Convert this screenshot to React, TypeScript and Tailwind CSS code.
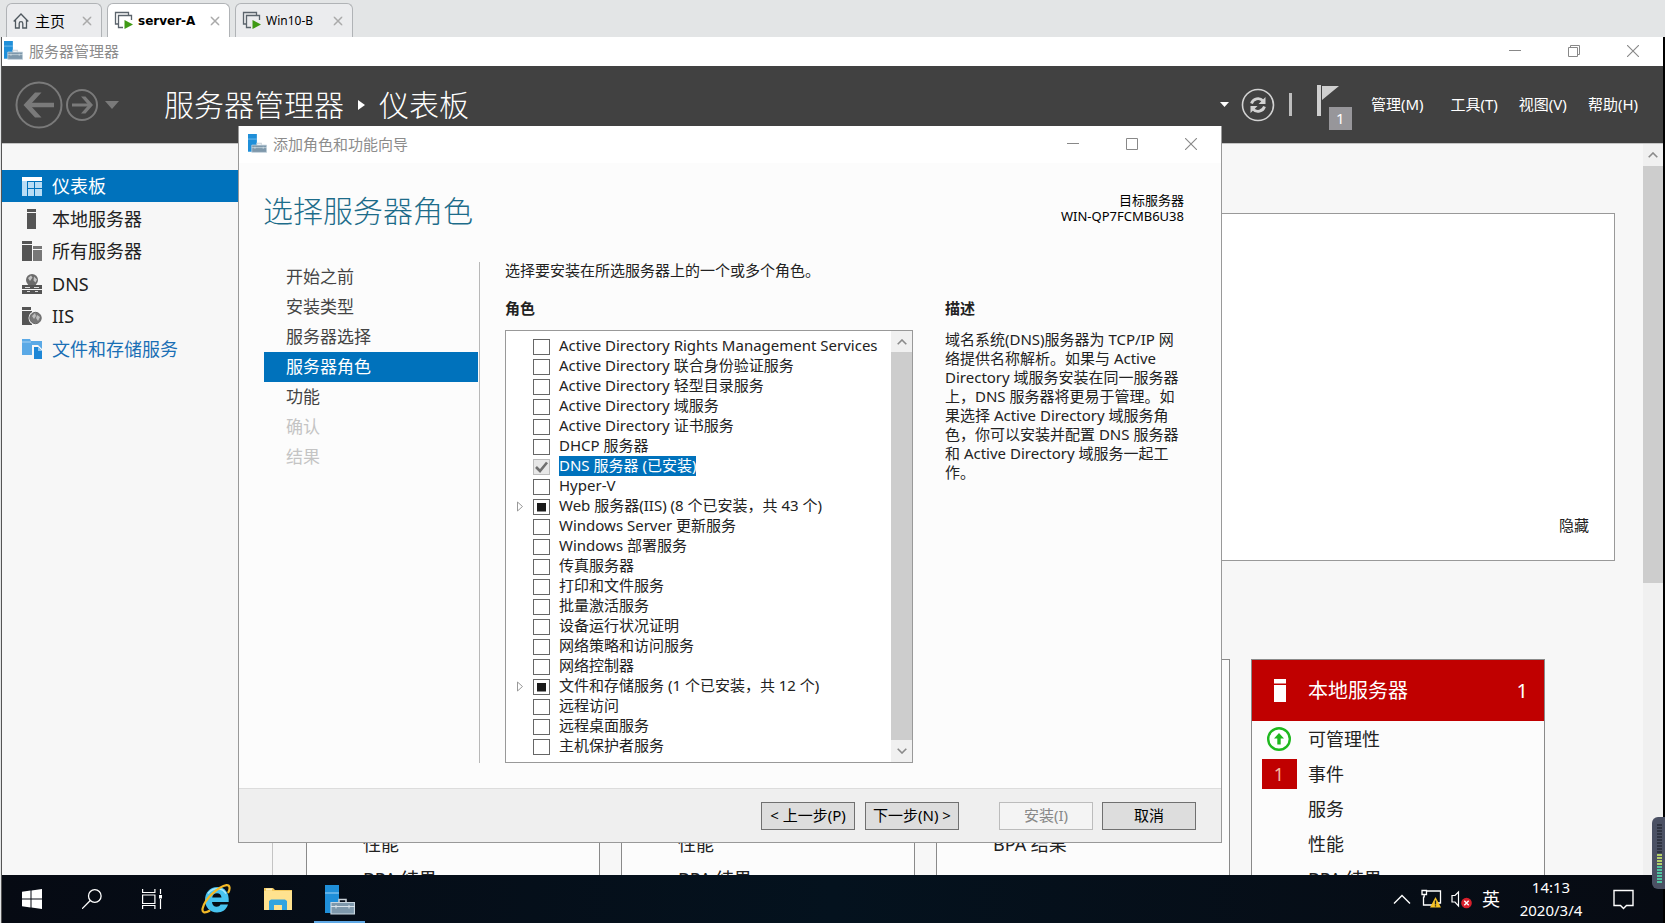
import { useEffect, useRef, type ReactNode } from 'react'
import { clsx } from 'clsx'

type RoleState = 'off' | 'installed' | 'partial'

const ROLES: { label: string; state?: RoleState }[] = [
  { label: 'Active Directory Rights Management Services' },
  { label: 'Active Directory 联合身份验证服务' },
  { label: 'Active Directory 轻型目录服务' },
  { label: 'Active Directory 域服务' },
  { label: 'Active Directory 证书服务' },
  { label: 'DHCP 服务器' },
  { label: 'DNS 服务器 (已安装)', state: 'installed' },
  { label: 'Hyper-V' },
  { label: 'Web 服务器(IIS) (8 个已安装，共 43 个)', state: 'partial' },
  { label: 'Windows Server 更新服务' },
  { label: 'Windows 部署服务' },
  { label: '传真服务器' },
  { label: '打印和文件服务' },
  { label: '批量激活服务' },
  { label: '设备运行状况证明' },
  { label: '网络策略和访问服务' },
  { label: '网络控制器' },
  { label: '文件和存储服务 (1 个已安装，共 12 个)', state: 'partial' },
  { label: '远程访问' },
  { label: '远程桌面服务' },
  { label: '主机保护者服务' },
]

const STEPS = [
  { label: '开始之前' },
  { label: '安装类型' },
  { label: '服务器选择' },
  { label: '服务器角色', current: true },
  { label: '功能' },
  { label: '确认', disabled: true },
  { label: '结果', disabled: true },
]

const SIDEBAR = [
  { label: '仪表板', icon: DashboardIcon, active: true },
  { label: '本地服务器', icon: ServerIcon },
  { label: '所有服务器', icon: ServersIcon },
  { label: 'DNS', icon: DnsIcon },
  { label: 'IIS', icon: IisIcon },
  { label: '文件和存储服务', icon: StorageIcon, link: true },
]

const MENUS = ['管理(M)', '工具(T)', '视图(V)', '帮助(H)']

/* ---------- icons ---------- */

function ServerManagerIcon({ className }: { className?: string }) {
  return (
    <svg viewBox="0 0 30 30" className={className} aria-hidden="true">
      <path d="M0 0h14v28H0z" fill="#1f8fd9" />
      <path d="M0 8h14" stroke="#8cc8f0" strokeWidth="1.2" />
      <path d="M14 17v-2.500h7V17" fill="none" stroke="#c8d0d6" strokeWidth="1.6" />
      <path d="M6 17.500h23.500v11.500H6z" fill="#7e98ab" stroke="#c8d6e0" strokeWidth="1.2" />
      <path d="M6 21.500h24M11 20v3.500M24 20v3.500" stroke="#dbe5ec" strokeWidth="1" />
    </svg>
  )
}

function DashboardIcon() {
  return (
    <svg viewBox="0 0 20 19" className="h-[19px] w-5" aria-hidden="true">
      <path d="M0 0h20v4H0z" fill="#fff" />
      <path d="M0 4h5v15H0zM6 5h6v6H6zM13 5h7v6h-7zM6 12h6v7H6zM13 12h7v7h-7z" fill="#b9ddf5" />
    </svg>
  )
}

function ServerIcon() {
  return (
    <svg viewBox="0 0 20 20" className="size-5" aria-hidden="true">
      <path d="M5 0h9v3H5zM5 4h9v16H5z" fill="#555" />
    </svg>
  )
}

function ServersIcon() {
  return (
    <svg viewBox="0 0 20 20" className="size-5" aria-hidden="true">
      <path d="M0 0h10v3H0zM0 4h10v16H0z" fill="#555" />
      <path d="M11 5h9v3h-9zM11 9h9v11h-9z" fill="#777" />
    </svg>
  )
}

function DnsIcon() {
  return (
    <svg viewBox="0 0 20 20" className="size-5" aria-hidden="true">
      <circle cx="10" cy="6" r="6" fill="#6b6b6b" />
      <path d="M6 4l3-2.500 1.500 2L8 7zM12 2.500l3 3-1.500 3-2-2z" fill="#c4c4c4" />
      <path d="M0 11h20v4H0zM0 16h20v4H0z" fill="#555" />
      <path d="M3 13.500h5M12 13.500h5M5 17.500h3M13 17.500h3" stroke="#ddd" />
    </svg>
  )
}

function IisIcon() {
  return (
    <svg viewBox="0 0 20 20" className="size-5" aria-hidden="true">
      <path d="M0 1h9v3H0zM0 5h10v14H0z" fill="#555" />
      <circle cx="13.500" cy="12" r="7" fill="#f7f7f7" />
      <circle cx="13.500" cy="12" r="5.700" fill="#777" stroke="#666" strokeWidth="1" />
      <path d="M10 10l3-3 1 3-2 3zM15 9l3 2-2 4-2-3z" fill="#bdbdbd" />
    </svg>
  )
}

function StorageIcon() {
  return (
    <svg viewBox="0 0 20 20" className="size-5" aria-hidden="true">
      <path d="M0 0h8l1 2h11v14H0z" fill="#5aa9e6" />
      <path d="M0 3h9" stroke="#a8d2f3" />
      <path d="M10 6h6l4 4v10h-9v-4h-1z" fill="#f7f7f7" />
      <path d="M12 8h4l4 4v8h-8z" fill="#1e87d6" />
      <path d="M16 8v4h4z" fill="#8cc6f2" />
    </svg>
  )
}

function MinimizeIcon() {
  return (
    <svg viewBox="0 0 12 12" className="size-3" aria-hidden="true">
      <path d="M0 5.500h12" stroke="#888" />
    </svg>
  )
}

function MaximizeIcon() {
  return (
    <svg viewBox="0 0 12 12" className="size-3" aria-hidden="true">
      <path d="M.5.5h11v11H.5z" fill="none" stroke="#888" />
    </svg>
  )
}

function RestoreIcon() {
  return (
    <svg viewBox="0 0 12 12" className="size-3" aria-hidden="true">
      <path d="M.5 2.500h9v9h-9zM2.500 2.500v-2h9v9h-2" fill="none" stroke="#888" />
    </svg>
  )
}

function CloseIcon({ stroke = '#888', strokeWidth = 1.1 }: { stroke?: string; strokeWidth?: number }) {
  return (
    <svg viewBox="0 0 12 12" className="size-3" aria-hidden="true">
      <path d="M0 0l12 12M12 0L0 12" stroke={stroke} strokeWidth={strokeWidth} />
    </svg>
  )
}

function VmIcon() {
  return (
    <svg viewBox="0 0 20 19" className="h-[19px] w-5" aria-hidden="true">
      <path d="M4 13H1.500V1.500h13V4" fill="none" stroke="#5b646c" strokeWidth="1.300" />
      <path d="M9 16.500H4.500v-12h13V9" fill="none" stroke="#5b646c" strokeWidth="1.300" />
      <path d="M10.500 9l8.500 4.500-8.500 4.500z" fill="#3f9a14" />
    </svg>
  )
}

function HomeIcon() {
  return (
    <svg viewBox="0 0 16 16" className="mr-0.5 size-4" aria-hidden="true">
      <path d="M.7 8.500L8 1l7.300 7.500M2.500 7v8h3.700v-4.500a1.800 1.800 0 0 1 3.600 0V15h3.700V7" fill="none" stroke="#4f585f" strokeWidth="1.300" />
    </svg>
  )
}

function Chevron({ up = false }: { up?: boolean }) {
  return (
    <svg viewBox="0 0 10 6" className={clsx('h-1.5 w-2.5', !up && 'rotate-180')} aria-hidden="true">
      <path d="M.7 5.300L5 1l4.300 4.300" fill="none" stroke="#8a8a8a" strokeWidth="1.600" />
    </svg>
  )
}

/* ---------- shared pieces ---------- */

function CaptionButtons({ restored = false }: { restored?: boolean }) {
  const button = 'flex h-7 w-[59px] items-center justify-center'
  return (
    <div className="ml-auto flex pr-px">
      <button aria-label="最小化" className={button}><MinimizeIcon /></button>
      <button aria-label="最大化" className={button}>{restored ? <RestoreIcon /> : <MaximizeIcon />}</button>
      <button aria-label="关闭" className={button}><CloseIcon /></button>
    </div>
  )
}

function Tab({ icon, label, active = false, className }: { icon: ReactNode; label: string; active?: boolean; className: string }) {
  return (
    <div
      className={clsx(
        'flex h-[34px] items-center rounded-t-md border border-b-0 border-[#b0b3b6] pr-2 pl-1.5 leading-5 text-black',
        active ? "bg-white font-['DejaVu_Sans',sans-serif] font-bold" : 'bg-[#ebecee]',
        className,
      )}
    >
      {icon}
      <span className="ml-1 whitespace-nowrap">{label}</span>
      <button aria-label="关闭标签" className="ml-auto scale-75"><CloseIcon stroke="#aaa" strokeWidth={2} /></button>
    </div>
  )
}

/* ---------- server manager ---------- */

function HeaderBar() {
  return (
    <header className="flex h-[77px] shrink-0 items-center bg-[#414141] pr-[25px] pl-[13px] text-white">
      <button aria-label="后退">
        <svg viewBox="0 0 48 48" className="size-12" fill="none" stroke="#7a7a7a">
          <circle cx="24" cy="24" r="22.500" strokeWidth="2" />
          <path d="M39 24H12" strokeWidth="4.500" />
          <path d="M20 11.500h6.500L15 24l11.500 12.500H20L8.500 24z" fill="#7a7a7a" stroke="none" />
        </svg>
      </button>
      <button aria-label="前进" className="ml-0.5">
        <svg viewBox="0 0 34 34" className="size-[34px]" fill="none" stroke="#7a7a7a">
          <circle cx="17" cy="17" r="15" strokeWidth="2" />
          <path d="M7 17h19" strokeWidth="3" />
          <path d="M16 8.500h4.500L28 17l-7.500 8.500H16L23.500 17z" fill="#7a7a7a" stroke="none" />
        </svg>
      </button>
      <button aria-label="历史记录" className="ml-1.5">
        <svg viewBox="0 0 14 8" className="h-2 w-3.5"><path d="M0 0h14L7 8z" fill="#7a7a7a" /></svg>
      </button>
      <h1 className="ml-[45px] flex items-center text-[30px] leading-10 font-light">
        服务器管理器
        <svg viewBox="0 0 7 10" className="mx-3.5 h-2.5 w-[7px]" aria-hidden="true"><path d="M0 0l7 5-7 5z" fill="#fff" /></svg>
        仪表板
      </h1>
      <div className="ml-auto flex items-center">
        <button aria-label="更多">
          <svg viewBox="0 0 9 5" className="h-[5px] w-[9px]"><path d="M0 0h9L4.500 5z" fill="#fff" /></svg>
        </button>
        <button aria-label="刷新" className="ml-3">
          <svg viewBox="0 0 34 34" className="size-[34px]" fill="none" stroke="#d2d2d2">
            <circle cx="17" cy="17" r="15.500" strokeWidth="1.600" />
            <path d="M10.500 15.500c1.500-5 8-6.500 11.500-2.500M23.500 18.500c-1.500 5-8 6.500-11.500 2.500" strokeWidth="2.800" />
            <path d="M24.500 9v7h-7zM9.500 25v-7h7z" fill="#d2d2d2" stroke="none" />
          </svg>
        </button>
        <span className="ml-3.5 h-[23px] w-[3px] bg-[#bdbdbd]" />
        <button aria-label="通知" className="relative ml-[25px] h-[42px] w-[35px]">
          <svg viewBox="0 0 22 31" className="h-[31px] w-[22px] -translate-y-1">
            <path d="M0 0h4v31H0zM5 1h17L5 15z" fill="#cfcfcf" />
          </svg>
          <span className="absolute right-0 -bottom-1 size-[23px] bg-[#97969a] text-[15px] leading-[23px]">1</span>
        </button>
        <nav className="ml-[19px] flex gap-[21px] pb-0.5 text-[15px] leading-5">
          {MENUS.map((menu) => (
            <button key={menu} className="first:mr-1.5">{menu}</button>
          ))}
        </nav>
      </div>
    </header>
  )
}

function Sidebar() {
  return (
    <aside className="w-[271px] shrink-0 border-r border-[#c4c4c4] pt-[26px]">
      <nav className="flex h-[195px] flex-col justify-between">
        {SIDEBAR.map(({ label, icon: Icon, active, link }) => (
          <a
            key={label}
            href="#"
            className={clsx(
              'flex h-8 items-center gap-2.5 pl-5 text-[18px] leading-8',
              active ? 'bg-[#0072bc] text-white' : link ? 'text-[#1a6fb5]' : 'text-[#222]',
            )}
          >
            <Icon />
            {label}
          </a>
        ))}
      </nav>
    </aside>
  )
}

function TileRow({ label, children }: { label: string; children?: ReactNode }) {
  return (
    <div className="flex h-[35px] items-center">
      <div className="flex w-14 items-center justify-center pr-0.5">{children}</div>
      <span className="text-[18px] leading-7">{label}</span>
    </div>
  )
}

function Dashboard() {
  return (
    <main className="min-w-0 flex-1 overflow-hidden pt-[69px] pr-7 pl-[33px]">
      <section className="flex h-[348px] items-end justify-end border border-[#999] bg-white pr-[25px] pb-[25px]">
        <button className="text-[15px] leading-5 text-[#222]">隐藏</button>
      </section>
      <div className="mt-[98px] flex gap-[21px] text-[#222]">
        {[['性能', 'BPA 结果'], ['性能', 'BPA 结果'], ['BPA 结果']].map((rows, i) => (
          <section key={i} className="h-[260px] w-[294px] shrink-0 border border-[#8a8a8a] bg-[#fcfcfc] pt-[166px]">
            {rows.map((row) => <TileRow key={row} label={row} />)}
          </section>
        ))}
        <section className="h-[260px] w-[294px] shrink-0 border border-[#8a8a8a] bg-[#fcfcfc]">
          <h2 className="flex h-[61px] items-center bg-[#c00000] pr-4 text-[20px] leading-8 font-normal text-white">
            <svg viewBox="0 0 12 23" className="mr-[22px] ml-[22px] h-[23px] w-3" aria-hidden="true">
              <path d="M0 0h12v4.500H0zM0 6h12v17H0z" fill="#fff" />
            </svg>
            本地服务器
            <span className="ml-auto">1</span>
          </h2>
          <TileRow label="可管理性">
            <svg viewBox="0 0 24 24" className="size-6" aria-hidden="true">
              <circle cx="12" cy="12" r="10.800" fill="#fff" stroke="#1fb81f" strokeWidth="2.400" />
              <path d="M12 6l5 5.500h-3.300V17.500h-3.400v-6H7z" fill="#1fb81f" />
            </svg>
          </TileRow>
          <TileRow label="事件">
            <span className="h-[30px] w-[35px] bg-[#c00000] text-center text-[18px] leading-[30px] text-[#f3b9a0]">1</span>
          </TileRow>
          <TileRow label="服务" />
          <TileRow label="性能" />
          <TileRow label="BPA 结果" />
        </section>
      </div>
    </main>
  )
}

/* ---------- wizard ---------- */

function RoleRow({ label, state = 'off' }: { label: string; state?: RoleState }) {
  const box = useRef<HTMLInputElement>(null)

  useEffect(() => {
    if (box.current) box.current.indeterminate = state === 'partial'
  }, [state])

  return (
    <li className="flex h-5 items-center">
      <span className="flex w-[27px] justify-center">
        {state === 'partial' && (
          <button aria-label="展开">
            <svg viewBox="0 0 6 11" className="h-[11px] w-1.5"><path d="M.5 1v9l5-4.500z" fill="#fff" stroke="#999" /></svg>
          </button>
        )}
      </span>
      <label className="flex items-center">
        <span className="relative mt-0.5 flex">
          <input
            ref={box}
            type="checkbox"
            defaultChecked={state === 'installed'}
            disabled={state === 'installed'}
            className={clsx('h-4 w-[17px] appearance-none border', state === 'installed' ? 'border-[#bbb] bg-[#e8e8e8]' : 'border-[#666] bg-white')}
          />
          {state === 'installed' && (
            <svg viewBox="0 0 17 16" className="absolute inset-0" aria-hidden="true">
              <path d="M3 8l4 4 7-8.500" fill="none" stroke="#707070" strokeWidth="2.600" />
            </svg>
          )}
          {state === 'partial' && (
            <svg viewBox="0 0 17 16" className="absolute inset-0" aria-hidden="true">
              <path d="M4 4h9v8.500H4z" fill="#1a1a1a" />
            </svg>
          )}
        </span>
        <span className={clsx('ml-[9px] h-5 leading-[18px] whitespace-nowrap', state === 'installed' && 'bg-[#0072bc] text-white')}>{label}</span>
      </label>
    </li>
  )
}

function WizardButton({ children, className, disabled }: { children: ReactNode; className?: string; disabled?: boolean }) {
  return (
    <button
      disabled={disabled}
      className={clsx(
        'h-7 w-[94px] border pb-0.5 text-[15px] leading-6 whitespace-nowrap',
        disabled ? 'border-[#bcbcbc] bg-[#f4f4f4] text-[#888]' : 'border-[#707070] bg-[#dddddd] text-black',
        className,
      )}
    >
      {children}
    </button>
  )
}

function Wizard() {
  return (
    <div
      role="dialog"
      aria-label="添加角色和功能向导"
      className="absolute top-[126px] left-[238px] w-[984px] border border-t-0 border-[#999] bg-[#fcfcfc] text-[15px] text-[#222]"
    >
      <div className="flex h-[37px] items-center bg-white pb-0.5 pl-[9px] text-[#8c8c8c]">
        <ServerManagerIcon className="mr-1.5 size-[19px]" />
        <span className="leading-5">添加角色和功能向导</span>
        <CaptionButtons />
      </div>

      <div className="flex items-start justify-between pt-[29px] pr-[37px] pl-6">
        <h2 className="text-[30px] leading-[38px] font-light text-[#1d6c8a]">选择服务器角色</h2>
        <p className="text-right text-[13px] leading-4 text-black">
          目标服务器
          <br />
          WIN-QP7FCMB6U38
        </p>
      </div>

      <div className="flex pt-8 pb-[25px] pl-[25px]">
        <ol className="w-[216px] border-r border-[#b8b8b8] pr-px">
          {STEPS.map(({ label, current, disabled }) => (
            <li
              key={label}
              className={clsx(
                'h-[30px] pl-[22px] text-[17px] leading-[30px]',
                current && 'bg-[#0072bc] text-white',
                disabled ? 'text-[#c4c4c4]' : !current && 'text-[#444]',
              )}
            >
              {label}
            </li>
          ))}
        </ol>

        <div className="ml-[25px] w-[408px]">
          <p className="leading-4">选择要安装在所选服务器上的一个或多个角色。</p>
          <h3 className="mt-[22px] leading-4 font-bold">角色</h3>
          <div className="mt-3.5 flex border border-[#999] bg-white">
            <ul className="min-w-0 flex-1 pt-[5px] pb-1.5 leading-5">
              {ROLES.map((role) => <RoleRow key={role.label} {...role} />)}
            </ul>
            <div className="flex w-[21px] flex-col bg-[#cdcdcd]">
              <button aria-label="向上滚动" className="flex h-[21px] items-center justify-center bg-[#f0f0f0]"><Chevron up /></button>
              <button aria-label="向下滚动" className="mt-auto flex h-[22px] items-center justify-center bg-[#f0f0f0]"><Chevron /></button>
            </div>
          </div>
        </div>

        <div className="ml-8 w-60 pt-[38px]">
          <h3 className="leading-4 font-bold">描述</h3>
          <p className="mt-3.5 leading-[19px]">
            域名系统(DNS)服务器为 TCP/IP 网络提供名称解析。如果与 Active Directory 域服务安装在同一服务器上，DNS
            服务器将更易于管理。如果选择 Active Directory 域服务角色，你可以安装并配置 DNS 服务器和 Active Directory
            域服务一起工作。
          </p>
        </div>
      </div>

      <div className="flex h-[54px] justify-end border-t border-[#dcdcdc] bg-[#efefef] pt-[13px] pr-[25px]">
        <WizardButton>&lt; 上一步(P)</WizardButton>
        <WizardButton className="ml-2.5">下一步(N) &gt;</WizardButton>
        <WizardButton className="ml-10" disabled>安装(I)</WizardButton>
        <WizardButton className="ml-[9px]">取消</WizardButton>
      </div>
    </div>
  )
}

/* ---------- taskbar ---------- */

function Taskbar() {
  return (
    <footer className="flex h-12 shrink-0 items-center bg-linear-to-r from-[#060a13] via-[#04121e] to-[#070b13] pr-[29px] pl-5 text-white">
      <button aria-label="开始">
        <svg viewBox="0 0 20 20" className="size-5" fill="#fff">
          <path d="M0 2.800L8.500 1.600v7.900H0zM9.500 1.500L20 0v9.500H9.500zM0 10.500h8.500v7.900L0 17.200zM9.500 10.500H20V20L9.500 18.500z" />
        </svg>
      </button>
      <button aria-label="搜索" className="ml-10">
        <svg viewBox="0 0 20 20" className="size-5" fill="none" stroke="#fff" strokeWidth="1.300">
          <circle cx="12.800" cy="7" r="6.300" />
          <path d="M8.300 11.500L0 19.800" />
        </svg>
      </button>
      <button aria-label="任务视图" className="ml-10">
        <svg viewBox="0 0 21 20" className="h-5 w-[21px]" fill="none" stroke="#fff" strokeWidth="1.200">
          <path d="M.6 0v3.500h12.300V0M.6 6h12.300v8.500H.6zM.6 20v-3.500h12.300V20M18.500 0v5M18.500 10v10" />
          <path d="M17 6h3v3.500h-3z" fill="#fff" stroke="none" />
        </svg>
      </button>
      <button aria-label="Internet Explorer" className="ml-[38px]">
        <svg viewBox="0 0 30 30" className="size-[30px]" fill="none">
          <path d="M16.500 3C8.500 3 4 9 4 16s5 12.500 12 12.500c5.500 0 9.500-3 11-8h-7.500c-.8 1.500-2 2.200-3.800 2.200-2.700 0-4.500-1.700-4.700-4.700h16.700C28.500 9 24 3 16.500 3zm-5.300 10.500c.4-2.700 2.200-4.200 4.800-4.200s4.200 1.500 4.500 4.200z" fill="#48c3f0" fillRule="evenodd" />
          <path d="M7 9.500C9.500 6 13 4.500 17 4.700c3.500.2 6.500 2 8 5" stroke="#a9e8fb" strokeWidth="1.500" />
          <path d="M27 9C29.500 4.500 29 1 25.500 1.200 18 2.500 4 14 1.600 24.500c-.8 4.500 2.400 5 7.400 2" stroke="#f2b927" strokeWidth="2.200" />
        </svg>
      </button>
      <button aria-label="文件资源管理器" className="ml-[33px]">
        <svg viewBox="0 0 28 24" className="h-6 w-7">
          <path d="M0 1h9l2 2h17v20H0z" fill="#f3c95f" />
          <path d="M0 4h28v19H0z" fill="#ffe28f" />
          <path d="M2 1.500h6v2H2z" fill="#fff1c0" />
          <path d="M5 23v-9l2-1.500h14l2 1.500v9h-5v-5h-8v5z" fill="#32a4df" />
        </svg>
      </button>
      <button aria-label="服务器管理器" className="ml-[22px] flex h-12 w-[51px] items-center justify-center border-b-2 border-[#5fa9e6] pt-1">
        <ServerManagerIcon className="size-[30px]" />
      </button>

      <div className="ml-auto flex items-center">
        <button aria-label="显示隐藏的图标">
          <svg viewBox="0 0 18 10" className="h-2.5 w-[18px]" fill="none" stroke="#fff" strokeWidth="1.400"><path d="M1 9.500l8-8 8 8" /></svg>
        </button>
        <button aria-label="网络" className="ml-2.5">
          <svg viewBox="0 0 21 20" className="h-5 w-[21px]" fill="none" stroke="#fff" strokeWidth="1.300">
            <path d="M5 2h14.500v12H14M2.500 7.500V16H11M1 1.500h4.500v4H1zM3.200 5.500v3" />
            <path d="M14.500 8l5.500 10.500H9z" fill="#f7c325" stroke="none" />
            <path d="M14.500 11.500v4M14.500 16.300v1.200" stroke="#222" />
          </svg>
        </button>
        <button aria-label="音量" className="ml-[9px]">
          <svg viewBox="0 0 21 20" className="h-5 w-[21px]" fill="none" stroke="#fff" strokeWidth="1.200">
            <path d="M1 6.500h3L7.500 3v14L4 13H1z" />
            <circle cx="15.500" cy="14" r="5.300" fill="#d8202c" stroke="none" />
            <path d="M13.300 11.800l4.400 4.400M17.700 11.800l-4.400 4.400" strokeWidth="1.400" />
          </svg>
        </button>
        <button className="ml-2.5 text-[18px] leading-6">英</button>
        <time className="ml-[17px] w-[68px] text-center text-[15px] leading-[23px] whitespace-nowrap">
          14:13
          <br />
          2020/3/4
        </time>
        <button aria-label="通知中心" className="ml-7">
          <svg viewBox="0 0 21 21" className="size-[21px]" fill="none" stroke="#fff" strokeWidth="1.400"><path d="M1 1.500h19v15h-6.500l-3 3-3-3H1z" /></svg>
        </button>
      </div>
    </footer>
  )
}

function LevelMeter() {
  return (
    <div className="absolute right-0 bottom-[34px] flex h-[72px] w-[13px] flex-col justify-end gap-px rounded-l-md bg-[#4b5164] pr-[3px] pb-1.5 pl-[5px]">
      {Array.from({ length: 20 }, (_, i) => (
        <span key={i} className={clsx('h-0.5', i < 10 ? 'bg-[#2f3442]' : i < 14 ? 'bg-[#b3cf6a]' : 'bg-[#4fc3a1]')} />
      ))}
    </div>
  )
}

export default function App() {
  return (
    <div className="relative flex h-screen flex-col overflow-hidden bg-[#e3e5e6] font-['Noto_Sans','Noto_Sans_CJK_SC',sans-serif]">
      <div className="flex h-[37px] shrink-0 items-end gap-[5px] pl-1.5">
        <Tab className="w-24 text-[15px]" icon={<HomeIcon />} label="主页" />
        <Tab className="w-[123px] text-[12px]" icon={<VmIcon />} label="server-A" active />
        <Tab className="w-[118px] text-[12px]" icon={<VmIcon />} label="Win10-B" />
      </div>

      <div className="ml-px flex min-h-0 flex-1 flex-col border-r-2 border-l border-r-black border-l-[#555] bg-[#f7f7f7]">
        <div className="flex h-[29px] shrink-0 items-center bg-white pb-0.5 pl-0.5 text-[15px] text-[#8c8c8c]">
          <ServerManagerIcon className="mr-1.5 size-[19px]" />
          <span className="leading-5">服务器管理器</span>
          <CaptionButtons restored />
        </div>
        <HeaderBar />
        <div className="flex min-h-0 flex-1 border-t border-[#c4c4c4]">
          <Sidebar />
          <Dashboard />
          <div className="flex w-5 shrink-0 flex-col bg-[#f0f0f0]">
            <button aria-label="向上滚动" className="flex h-[22px] items-center justify-center"><Chevron up /></button>
            <div className="h-[417px] bg-[#cdcdcd]" />
          </div>
        </div>
        <Taskbar />
      </div>

      <Wizard />
      <LevelMeter />
    </div>
  )
}
